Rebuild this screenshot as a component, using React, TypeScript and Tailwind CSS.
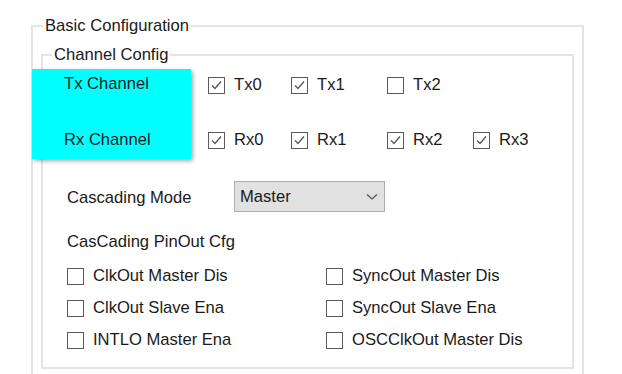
import React from 'react';

const Box = ({ checked }: { checked?: boolean }) => (
  <span className="w-[17px] h-[17px] border-[1.5px] border-[#5a5a5a] bg-white flex items-center justify-center shrink-0">
    {checked && (
      <svg width="13" height="13" viewBox="0 0 13 13">
        <polyline points="2,6.5 5,9.5 11,2.5" fill="none" stroke="#5a5a5a" strokeWidth="1.4" />
      </svg>
    )}
  </span>
);

const Check = ({ label, checked }: { label: string; checked?: boolean }) => (
  <div className="flex items-center h-[20px] gap-[9px]">
    <Box checked={checked} />
    <span className="leading-[20px]">{label}</span>
  </div>
);

export default function App() {
  return (
    <div
      className="w-[622px] h-[374px] bg-white overflow-hidden pt-[16px] pl-[31px] text-[16.6px] text-[#1a1a1a]"
      style={{ fontFamily: '"Liberation Sans", Arial, sans-serif' }}
    >
      <fieldset className="w-[553px] h-[400px] border-2 border-[#e4e4e4]">
        <legend className="ml-[10px] px-[2px] leading-[20px]">Basic Configuration</legend>

        <fieldset className="ml-[8px] mt-[9px] w-[533px] h-[324px] border-2 border-[#e4e4e4]">
          <legend className="ml-[9px] px-[2px] leading-[20px]">Channel Config</legend>

          <div className="flex mt-[4px]">
            <div className="-ml-[11px] w-[159px] h-[90px] bg-[#00ffff] shadow-[2px_2px_4px_rgba(0,0,0,0.35)] pl-[32px] pt-[5px] flex flex-col gap-[36px]">
              <span className="leading-[20px]">Tx Channel</span>
              <span className="leading-[20px]">Rx Channel</span>
            </div>
            <div className="ml-[17px] mt-[6px] grid grid-cols-[83px_96px_86px_auto] gap-y-[35px] h-fit">
              <Check label="Tx0" checked />
              <Check label="Tx1" checked />
              <Check label="Tx2" />
              <div />
              <Check label="Rx0" checked />
              <Check label="Rx1" checked />
              <Check label="Rx2" checked />
              <Check label="Rx3" checked />
            </div>
          </div>

          <div className="flex items-center mt-[22px] pl-[24px]">
            <span className="w-[167px] leading-[20px] pt-[3px]">Cascading Mode</span>
            <div className="w-[151px] h-[31px] bg-[#e1e1e1] border border-[#adadad] flex items-center justify-between pl-[5px] pr-[6px]">
              <span className="leading-[20px]">Master</span>
              <svg width="12" height="8" viewBox="0 0 12 8">
                <polyline points="1,1.5 6,6 11,1.5" fill="none" stroke="#555" strokeWidth="1.2" />
              </svg>
            </div>
          </div>

          <div className="mt-[20px] pl-[24px] leading-[20px]">CasCading PinOut Cfg</div>

          <div className="mt-[14px] pl-[24px] grid grid-cols-[259px_auto] gap-y-[12px]">
            <Check label="ClkOut Master Dis" />
            <Check label="SyncOut Master Dis" />
            <Check label="ClkOut Slave Ena" />
            <Check label="SyncOut Slave Ena" />
            <Check label="INTLO Master Ena" />
            <Check label="OSCClkOut Master Dis" />
          </div>
        </fieldset>
      </fieldset>
    </div>
  );
}
